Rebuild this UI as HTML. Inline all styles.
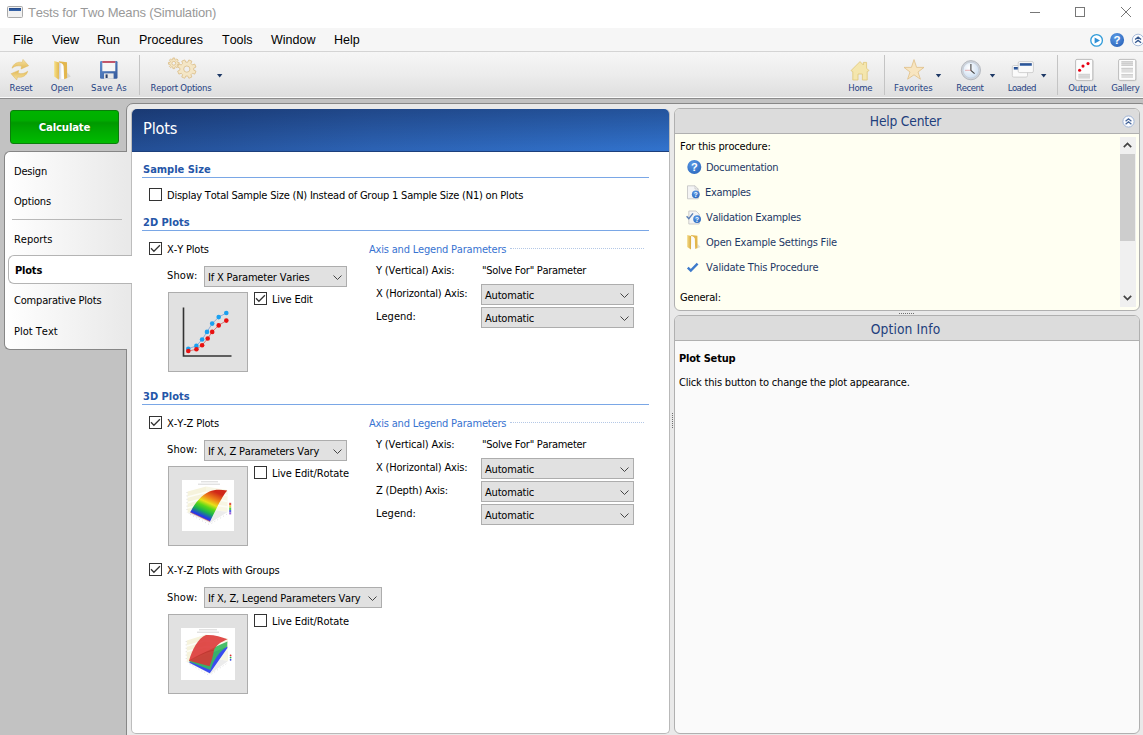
<!DOCTYPE html>
<html><head><meta charset="utf-8"><title>Tests for Two Means (Simulation)</title>
<style>
*{box-sizing:border-box;margin:0;padding:0}
html,body{width:1143px;height:735px;overflow:hidden;background:#c2c2c2;font-family:"DejaVu Sans Condensed","Liberation Sans",sans-serif;font-size:11px;color:#000;letter-spacing:-0.19px;font-kerning:none}
.lib{font-family:"Liberation Sans",sans-serif;letter-spacing:0}
.abs,.abs-c>*{position:absolute}
.t{position:absolute;white-space:nowrap;line-height:13px;font-size:11px;margin-top:1px}
#title{left:0;top:0;width:1143px;height:28px;background:#fff}
#title .tt{left:28px;top:5px;font-size:13px;line-height:15px;color:#999;white-space:nowrap;letter-spacing:-0.19px}
#menu{left:0;top:28px;width:1143px;height:24px;background:#f6f6f6;border-bottom:1px solid #d4d4d4}
#menu span{position:absolute;top:5px;font-size:12.5px;line-height:14px;color:#000;white-space:nowrap}
#tb{left:0;top:52px;width:1143px;height:47px;background:linear-gradient(#f6f6f6,#ececec 50%,#dedede);border-bottom:1px solid #8c8c8c;box-shadow:inset 0 -1px 0 #fbfbfb}
.tl{position:absolute;top:30px;font-size:9.5px;line-height:12px;letter-spacing:-0.1px;color:#1f4283;white-space:nowrap;transform:translateX(-50%)}
.sep{position:absolute;top:3px;width:1px;height:40px;background:#c4c4c4}
/* outer container */
#outer{left:126px;top:103px;width:1022px;height:650px;background:#e9e9e9;border:1px solid #878787;border-radius:7px}
#calc{left:10px;top:110px;width:109px;height:34px;border-radius:3px;border:1px solid #0b7d0b;background:linear-gradient(#00b300 0%,#00af00 28%,#009900 37%,#00a500 55%,#00bc00 100%);color:#fff;font-weight:bold;font-size:11.3px;text-align:center;line-height:33px;text-shadow:0 0 2px rgba(0,80,0,.5)}
#nav{left:4px;top:151px;width:123px;height:199px;border:1px solid #868686;border-right:none;border-radius:6px 0 0 6px;background:linear-gradient(90deg,#ffffff,#e9e9e9)}
#navsel{left:8px;top:255px;width:124px;height:29px;border:1px solid #b4b4b4;border-right:none;border-radius:6px 0 0 6px;background:#fff}
.nv{left:14px}
#navline{left:12px;top:219px;width:110px;height:1px;background:#b8b8b8}
#main{left:131px;top:109px;width:539px;height:625px;background:#fff;border-radius:5px;border:1px solid #b9b9b9;border-top:none;border-left-color:#bdbdbd}
#mainhd{left:132px;top:109px;width:537px;height:43px;border-radius:5px 5px 0 0;background:linear-gradient(rgba(0,0,25,.27),rgba(0,0,25,0) 95%),linear-gradient(90deg,#234e94 0%,#2c62b3 45%,#3172cc 100%);border-bottom:1px solid #1c3f7c}
#mainhd span{position:absolute;left:11px;top:10px;color:#fff;font-size:16.3px;line-height:20px}
.sh{font-weight:bold;color:#2556a8;font-size:11px;margin-top:1px;letter-spacing:0}
.sl{position:absolute;left:142px;width:507px;height:1px;background:#7aa7e6}
.cb{position:absolute;width:13px;height:13px;border:1px solid #333;background:#fff}
.cb svg{position:absolute;left:0;top:0}
.combo{position:absolute;height:21px;background:#e1e1e1;border:1px solid #adadad}
.combo span{position:absolute;left:3px;top:4px;white-space:nowrap;line-height:13px}
.combo svg{position:absolute;right:4px;top:8px}
.pbtn{position:absolute;left:168px;width:80px;height:80px;background:#e1e1e1;border:1px solid #adadad}
.alp{color:#3873d1}
.h{font-style:normal;padding:0 0.1px}
.dot{position:absolute;left:510px;width:134px;height:0;border-top:1px dotted #b4c8e6}
/* right panels */
.rp{position:absolute;left:674px;width:466px;border:1px solid #b0b0b0;border-radius:6px;overflow:hidden}
.rph{position:absolute;left:0;top:0;width:100%;height:25px;background:#dcdcdc;border-bottom:1px solid #b0b0b0;text-align:center;font-size:13.7px;line-height:24px;color:#1f3f7d}
.lk{color:#1e3966;letter-spacing:-0.32px}
</style></head><body>
<div id="title" class="abs lib"><span class="abs tt">Tests for Two Means (Simulation)</span></div>
<div id="menu" class="abs lib">
<span style="left:13px">File</span><span style="left:52px">View</span><span style="left:97px">Run</span><span style="left:139px">Procedures</span><span style="left:222px">Tools</span><span style="left:271px">Window</span><span style="left:334px">Help</span>
</div>
<div id="tb" class="abs">
<span class="tl" style="left:21px;letter-spacing:-0.3px">Reset</span>
<span class="tl" style="left:62px">Open</span>
<span class="tl" style="left:109px;letter-spacing:0.3px">Save As</span>
<span class="tl" style="left:181px;letter-spacing:-0.25px">Report Options</span>
<div class="sep" style="left:139px"></div>
<span class="tl" style="left:860.3px;letter-spacing:-0.3px">Home</span>
<span class="tl" style="left:913.3px">Favorites</span>
<span class="tl" style="left:969.8px;letter-spacing:-0.5px">Recent</span>
<span class="tl" style="left:1021.8px;letter-spacing:-0.5px">Loaded</span>
<span class="tl" style="left:1082.3px;letter-spacing:-0.3px">Output</span>
<span class="tl" style="left:1125.3px;letter-spacing:-0.3px">Gallery</span>
<div class="sep" style="left:884px"></div>
<div class="sep" style="left:1057px"></div>
</div>

<div id="outer" class="abs"></div>
<div id="calc" class="abs">Calculate</div>
<div id="nav" class="abs"></div>
<div id="navline" class="abs"></div>
<div id="main" class="abs"></div>
<div id="navsel" class="abs"></div>
<span class="t nv" style="top:164px">Design</span>
<span class="t nv" style="top:194px">Options</span>
<span class="t nv" style="top:232px;letter-spacing:-0.02px">Reports</span>
<span class="t nv" style="top:263px;font-weight:bold;left:15px">Plots</span>
<span class="t nv" style="top:293px">Comparative Plots</span>
<span class="t nv" style="top:324px;letter-spacing:0px">Plot Text</span>

<div id="mainhd" class="abs"><span>Plots</span></div>
<!--MAIN-->
<!-- Sample Size -->
<span class="t sh" style="left:143px;top:162px">Sample Size</span>
<div class="sl" style="top:177px"></div>
<div class="cb" style="left:149px;top:188px"></div>
<span class="t" style="left:167px;top:188px;letter-spacing:-0.222px">Display Total Sample Size (N) Instead of Group 1 Sample Size (N1) on Plots</span>
<!-- 2D Plots -->
<span class="t sh" style="left:143px;top:215px">2D Plots</span>
<div class="sl" style="top:230px"></div>
<div class="cb" style="left:149px;top:242px"><svg width="11" height="11" viewBox="0 0 11 11"><path d="M1 5.3 L3.9 8.3 L9.9 2.2" fill="none" stroke="#333" stroke-width="1.25"/></svg></div>
<span class="t" style="left:167px;top:242px">X<i class="h">-</i>Y Plots</span>
<span class="t" style="left:167px;top:268px;letter-spacing:0.1px">Show:</span>
<div class="combo" style="left:204px;top:266px;width:143px"><span>If X Parameter Varies</span><svg width="9" height="6" viewBox="0 0 9 6"><path d="M0.5 0.5 L4.5 4.5 L8.5 0.5" fill="none" stroke="#444" stroke-width="1"/></svg></div>
<div class="pbtn" style="top:292px">
<svg width="78" height="78" viewBox="169 293 78 78" style="position:absolute;left:0;top:0">
<path d="M183.5 307.5 V356 H231.5" fill="none" stroke="#333" stroke-width="1.6"/>
<polyline points="188.3,348.7 196.4,345.9 202.1,339.5 207,331.9 212.2,323.6 218.7,317.1 226.3,313" fill="none" stroke="#7aa0d8" stroke-width="0.8"/>
<polyline points="188.3,351 196.4,349.3 202.1,345.2 207.7,338.5 212.2,331.9 218.7,325.4 226.3,320.6" fill="none" stroke="#d06060" stroke-width="0.8"/>
<g fill="#1aa0f0"><circle cx="188.3" cy="348.7" r="2.3"/><circle cx="196.4" cy="345.9" r="2.3"/><circle cx="202.1" cy="339.5" r="2.3"/><circle cx="207" cy="331.9" r="2.3"/><circle cx="212.2" cy="323.6" r="2.3"/><circle cx="218.7" cy="317.1" r="2.3"/><circle cx="226.3" cy="313" r="2.3"/></g>
<g fill="#e81010"><circle cx="188.3" cy="351" r="2.3"/><circle cx="196.4" cy="349.3" r="2.3"/><circle cx="202.1" cy="345.2" r="2.3"/><circle cx="207.7" cy="338.5" r="2.3"/><circle cx="212.2" cy="331.9" r="2.3"/><circle cx="218.7" cy="325.4" r="2.3"/><circle cx="226.3" cy="320.6" r="2.3"/></g>
</svg></div>
<div class="cb" style="left:254px;top:292px"><svg width="11" height="11" viewBox="0 0 11 11"><path d="M1 5.3 L3.9 8.3 L9.9 2.2" fill="none" stroke="#333" stroke-width="1.25"/></svg></div>
<span class="t" style="left:272px;top:292px">Live Edit</span>
<span class="t alp" style="left:369px;top:242px">Axis and Legend Parameters</span>
<div class="dot" style="top:248px"></div>
<span class="t" style="left:376px;top:263px">Y (Vertical) Axis:</span>
<span class="t" style="left:482px;top:263px;letter-spacing:-0.29px">"Solve For" Parameter</span>
<span class="t" style="left:376px;top:286px">X (Horizontal) Axis:</span>
<div class="combo" style="left:481px;top:284px;width:153px"><span>Automatic</span><svg width="9" height="6" viewBox="0 0 9 6"><path d="M0.5 0.5 L4.5 4.5 L8.5 0.5" fill="none" stroke="#444" stroke-width="1"/></svg></div>
<span class="t" style="left:376px;top:309px;letter-spacing:0px">Legend:</span>
<div class="combo" style="left:481px;top:307px;width:153px"><span>Automatic</span><svg width="9" height="6" viewBox="0 0 9 6"><path d="M0.5 0.5 L4.5 4.5 L8.5 0.5" fill="none" stroke="#444" stroke-width="1"/></svg></div>
<!-- 3D Plots -->
<span class="t sh" style="left:143px;top:389px">3D Plots</span>
<div class="sl" style="top:404px"></div>
<div class="cb" style="left:149px;top:416px"><svg width="11" height="11" viewBox="0 0 11 11"><path d="M1 5.3 L3.9 8.3 L9.9 2.2" fill="none" stroke="#333" stroke-width="1.25"/></svg></div>
<span class="t" style="left:167px;top:416px">X<i class="h">-</i>Y<i class="h">-</i>Z Plots</span>
<span class="t" style="left:167px;top:442px;letter-spacing:0.1px">Show:</span>
<div class="combo" style="left:204px;top:440px;width:143px"><span>If X, Z Parameters Vary</span><svg width="9" height="6" viewBox="0 0 9 6"><path d="M0.5 0.5 L4.5 4.5 L8.5 0.5" fill="none" stroke="#444" stroke-width="1"/></svg></div>
<div class="pbtn" style="top:466px"><svg width="78" height="78" viewBox="169 467 78 78" style="position:absolute;left:0;top:0">
<defs><linearGradient id="rb" gradientUnits="userSpaceOnUse" x1="198" y1="519" x2="211" y2="490"><stop offset="0" stop-color="#6a2ad0"/><stop offset="0.14" stop-color="#2438e8"/><stop offset="0.3" stop-color="#18b050"/><stop offset="0.46" stop-color="#58d818"/><stop offset="0.6" stop-color="#e8e018"/><stop offset="0.76" stop-color="#f08818"/><stop offset="1" stop-color="#d02818"/></linearGradient></defs>
<rect x="182" y="480" width="52" height="51" fill="#fff"/>
<path d="M187.6 491.6 L206 486.4 L206 509 L187.6 513 Z" fill="#f6f3dc"/>
<path d="M206 486.4 L227.6 490 L227.6 512 L206 509 Z" fill="#f8f6e4"/>
<path d="M187.6 513 L206 509 L227.6 512 L210 523 Z" fill="#ececec"/>
<path d="M187.6 497 L206 492.2 L227.6 495.6 M187.6 502.6 L206 498 L227.6 501.4 M187.6 508 L206 503.6 L227.6 507" fill="none" stroke="#fdfdf6" stroke-width="1.6"/>
<path d="M190.2 512.2 C194 505 201 495 209.5 491.6 C214 489.6 220 489.4 227.2 490.6 C224 494 219 503 210 521.6 Z" fill="url(#rb)"/>
<path d="M190.2 512.2 L210 521.6" stroke="#d05030" stroke-width="0.5"/>
<rect x="229.2" y="502.8" width="2" height="2.4" fill="#e05040"/><rect x="229.2" y="505.2" width="2" height="2.4" fill="#e8d040"/><rect x="229.2" y="507.6" width="2" height="2.4" fill="#50c850"/><rect x="229.2" y="510" width="2" height="2.4" fill="#5060e0"/><rect x="229.2" y="512.4" width="2" height="2" fill="#a060d8"/>
<path d="M201 481.8 H218 M198 484.2 H220" stroke="#c4c4c4" stroke-width="0.7"/>
<path d="M190 514.4 L209 524.4 M211.5 523.4 L227.8 513.6 M187 492 V512.6" stroke="#c8c8c8" stroke-width="0.6" stroke-dasharray="1 2.4"/>
</svg>
</div>
<div class="cb" style="left:254px;top:466px"></div>
<span class="t" style="left:272px;top:466px;letter-spacing:-0.11px">Live Edit/Rotate</span>
<span class="t alp" style="left:369px;top:416px">Axis and Legend Parameters</span>
<div class="dot" style="top:422px"></div>
<span class="t" style="left:376px;top:437px">Y (Vertical) Axis:</span>
<span class="t" style="left:482px;top:437px;letter-spacing:-0.29px">"Solve For" Parameter</span>
<span class="t" style="left:376px;top:460px">X (Horizontal) Axis:</span>
<div class="combo" style="left:481px;top:458px;width:153px"><span>Automatic</span><svg width="9" height="6" viewBox="0 0 9 6"><path d="M0.5 0.5 L4.5 4.5 L8.5 0.5" fill="none" stroke="#444" stroke-width="1"/></svg></div>
<span class="t" style="left:376px;top:483px">Z (Depth) Axis:</span>
<div class="combo" style="left:481px;top:481px;width:153px"><span>Automatic</span><svg width="9" height="6" viewBox="0 0 9 6"><path d="M0.5 0.5 L4.5 4.5 L8.5 0.5" fill="none" stroke="#444" stroke-width="1"/></svg></div>
<span class="t" style="left:376px;top:506px;letter-spacing:0px">Legend:</span>
<div class="combo" style="left:481px;top:504px;width:153px"><span>Automatic</span><svg width="9" height="6" viewBox="0 0 9 6"><path d="M0.5 0.5 L4.5 4.5 L8.5 0.5" fill="none" stroke="#444" stroke-width="1"/></svg></div>
<!-- groups -->
<div class="cb" style="left:149px;top:563px"><svg width="11" height="11" viewBox="0 0 11 11"><path d="M1 5.3 L3.9 8.3 L9.9 2.2" fill="none" stroke="#333" stroke-width="1.25"/></svg></div>
<span class="t" style="left:167px;top:563px">X<i class="h">-</i>Y<i class="h">-</i>Z Plots with Groups</span>
<span class="t" style="left:167px;top:590px;letter-spacing:0.1px">Show:</span>
<div class="combo" style="left:204px;top:587px;width:178px"><span>If X, Z, Legend Parameters Vary</span><svg width="9" height="6" viewBox="0 0 9 6"><path d="M0.5 0.5 L4.5 4.5 L8.5 0.5" fill="none" stroke="#444" stroke-width="1"/></svg></div>
<div class="pbtn" style="top:614px"><svg width="78" height="78" viewBox="169 615 78 78" style="position:absolute;left:0;top:0">
<rect x="181" y="628" width="54" height="52" fill="#fff"/>
<path d="M186.8 640.4 L206 634.6 L206 657 L186.8 662 Z" fill="#f6f3dc"/>
<path d="M206 634.6 L228 638.4 L228 661 L206 657 Z" fill="#f8f6e4"/>
<path d="M186.8 662 L206 657 L228 661 L210 674 Z" fill="#ececec"/>
<path d="M186.8 646 L206 640.6 L228 644 M186.8 651.6 L206 646.6 L228 650" fill="none" stroke="#fdfdf6" stroke-width="1.6"/>
<path d="M189 662.4 C200 657 216 651 227.4 646.4 L227.4 648 L209.8 673.2 Z" fill="#3a4cf0"/>
<path d="M189 661.4 C198 656 212 648 227.4 641.6 L227.2 646.4 C219.6 651 213.6 660 210.4 670 Z" fill="#38b860" opacity="0.92"/>
<path d="M189 660.8 C192 650 198 638 206 635 C213 634.4 221 636.6 227.6 639.2 C221 642 216 645 214 650 C213 656 211.6 661 209.6 666.2 Z" fill="#dc3434" opacity="0.88"/>
<path d="M189 660.8 C196 657 204 652 214 650" stroke="#b02020" stroke-width="0.6" fill="none" opacity="0.6"/>
<circle cx="230.6" cy="655.4" r="0.9" fill="#e03030"/><circle cx="230.6" cy="657.6" r="0.9" fill="#30b050"/><circle cx="230.6" cy="659.8" r="0.9" fill="#3040e0"/>
<path d="M199 629.8 H217 M197 632.2 H219" stroke="#c4c4c4" stroke-width="0.7"/>
<path d="M189.6 664 L208.6 675 M211.5 674 L228 662.6 M186.2 641 V661.6" stroke="#c8c8c8" stroke-width="0.6" stroke-dasharray="1 2.4"/>
</svg>
</div>
<div class="cb" style="left:254px;top:614px"></div>
<span class="t" style="left:272px;top:614px;letter-spacing:-0.11px">Live Edit/Rotate</span>
<!--/MAIN-->
<!--RIGHT-->
<div class="rp" style="top:108px;height:203px;background:#fffff2">
<div class="rph" style="padding-right:3px">Help Center</div>
<svg class="abs" style="left:447px;top:6px" width="13" height="13" viewBox="0 0 13 13"><circle cx="6.5" cy="6.5" r="5.6" fill="#fbfcfe" stroke="#9fb4d6" stroke-width="1"/><path d="M3.6 6.2 L6.5 3.8 L9.4 6.2 M3.6 9.2 L6.5 6.8 L9.4 9.2" fill="none" stroke="#48689c" stroke-width="1.3"/></svg>
<!-- scrollbar -->
<div class="abs" style="left:445px;top:28px;width:16px;height:170px;background:#f0f0f0"></div>
<div class="abs" style="left:445px;top:45px;width:15px;height:87px;background:#cdcdcd"></div>
<svg class="abs" style="left:448px;top:33px" width="9" height="6" viewBox="0 0 9 6"><path d="M0.8 5.2 L4.5 1.5 L8.2 5.2" fill="none" stroke="#444" stroke-width="1.7"/></svg>
<svg class="abs" style="left:448px;top:186px" width="9" height="6" viewBox="0 0 9 6"><path d="M0.8 0.8 L4.5 4.5 L8.2 0.8" fill="none" stroke="#444" stroke-width="1.7"/></svg>
</div>
<span class="t" style="left:680px;top:139px">For this procedure:</span>
<span class="t lk" style="left:706px;top:160px">Documentation</span>
<span class="t lk" style="left:705px;top:185px">Examples</span>
<span class="t lk" style="left:706px;top:210px">Validation Examples</span>
<span class="t lk" style="left:706px;top:235px;letter-spacing:-0.22px">Open Example Settings File</span>
<span class="t lk" style="left:706px;top:260px;letter-spacing:-0.22px">Validate This Procedure</span>
<span class="t" style="left:680px;top:290px">General:</span>
<!--HELPICONS-->
<svg class="abs" style="left:684px;top:157px" width="20" height="120" viewBox="684 157 20 120">
<defs><radialGradient id="qg" cx="0.4" cy="0.3" r="0.8"><stop offset="0" stop-color="#5a9ae6"/><stop offset="1" stop-color="#2a66bc"/></radialGradient>
<linearGradient id="fg" x1="0" y1="0" x2="1" y2="0"><stop offset="0" stop-color="#f3d985"/><stop offset="1" stop-color="#d9ab3c"/></linearGradient></defs>
<circle cx="694.3" cy="167" r="7" fill="url(#qg)"/>
<text x="694.3" y="171" text-anchor="middle" font-family="Liberation Sans, sans-serif" font-weight="bold" font-size="11" fill="#fff" letter-spacing="0">?</text>
<!-- examples doc -->
<path d="M687.5 185.8 H695 L698.2 189 V198.8 H687.5 Z" fill="#f4f4f4" stroke="#c2c2c2" stroke-width="0.8"/>
<path d="M695 185.8 V189 H698.2" fill="none" stroke="#c2c2c2" stroke-width="0.7"/>
<circle cx="695.8" cy="194.3" r="3.9" fill="url(#qg)"/>
<text x="695.8" y="196.7" text-anchor="middle" font-family="Liberation Sans, sans-serif" font-weight="bold" font-size="6.5" fill="#fff" letter-spacing="0">?</text>
<!-- validation doc -->
<path d="M688.8 211 H696 L699.2 214.2 V224 H688.8 Z" fill="#f4f4f4" stroke="#c2c2c2" stroke-width="0.8"/>
<path d="M686.6 216.2 L688.8 218.6 L693 213.4" fill="none" stroke="#5a7fb6" stroke-width="1.4"/>
<circle cx="697.1" cy="219.1" r="3.9" fill="url(#qg)"/>
<text x="697.1" y="221.5" text-anchor="middle" font-family="Liberation Sans, sans-serif" font-weight="bold" font-size="6.5" fill="#fff" letter-spacing="0">?</text>
<!-- folder -->
<path d="M 690.9 235.1 L 697.4 235.8 L 697.6 248.1 L 695.2 249.1 L 694.7 238.7 C 694.4 237.2 693.1 236.4 691.4 236.2 Z" fill="#e3b74e"/>
<path d="M 691.2 236.3 C 693.0 236.5 694.2 237.3 694.4 238.7 L 695.0 249.0 L 691.2 248.8 Z" fill="#fbfbfb"/>
<path d="M 687.2 234.9 L 691.1 236.1 L 691.0 249.5 L 687.2 247.1 Z" fill="url(#fg)"/>
<path d="M 697.6 243.9 L 700.5 246.9 L 697.6 248.2 Z" fill="#b8b8b8" opacity="0.45"/>
<!-- check -->
<path d="M687.8 267.6 L690.8 270.6 L697.6 263.6" fill="none" stroke="#3d7acb" stroke-width="2.4"/>
</svg>
<!--/HELPICONS-->
<div class="rp" style="top:315px;height:419px;background:#fafafa">
<div class="rph" style="padding-right:3px;line-height:26px;letter-spacing:0.12px">Option Info</div>
</div>
<span class="t" style="left:679px;top:351px;font-weight:bold">Plot Setup</span>
<span class="t" style="left:679px;top:375px">Click this button to change the plot appearance.</span>
<!-- splitter dots -->
<div class="abs" style="left:899px;top:313px;width:15px;height:1px;background:repeating-linear-gradient(90deg,#6e6e6e 0 1px,transparent 1px 2px)"></div>
<div class="abs" style="left:672px;top:413px;width:1px;height:15px;background:repeating-linear-gradient(180deg,#6e6e6e 0 1px,transparent 1px 2px)"></div>
<!--/RIGHT-->
<!--TBICONS-->
<svg class="abs" style="left:0;top:0" width="1143" height="98" viewBox="0 0 1143 98">
<defs>
<linearGradient id="gold" x1="0" y1="0" x2="0" y2="1"><stop offset="0" stop-color="#f6e2a4"/><stop offset="1" stop-color="#e2b955"/></linearGradient>
<linearGradient id="fold" x1="0" y1="0" x2="1" y2="0"><stop offset="0" stop-color="#f6e088"/><stop offset="1" stop-color="#e2b74e"/></linearGradient>
<linearGradient id="pap" x1="0" y1="0" x2="1" y2="0"><stop offset="0" stop-color="#c4c8d6"/><stop offset="0.55" stop-color="#ffffff"/><stop offset="1" stop-color="#ffffff"/></linearGradient>
<linearGradient id="flop" x1="0" y1="0" x2="1" y2="1"><stop offset="0" stop-color="#5f8fd0"/><stop offset="1" stop-color="#34589a"/></linearGradient>
<linearGradient id="wbar" x1="0" y1="0" x2="0" y2="1"><stop offset="0" stop-color="#1f4585"/><stop offset="1" stop-color="#3a68ae"/></linearGradient>
<radialGradient id="qg2" cx="0.4" cy="0.3" r="0.8"><stop offset="0" stop-color="#5a9ae6"/><stop offset="1" stop-color="#2a62b8"/></radialGradient>
<radialGradient id="clk" cx="0.4" cy="0.35" r="0.8"><stop offset="0" stop-color="#ffffff"/><stop offset="1" stop-color="#c4d8ee"/></radialGradient>
</defs>
<!-- title icon -->
<rect x="7.5" y="6.5" width="15" height="11" rx="1" fill="#f1f1f1" stroke="#a9a9a9"/>
<rect x="9" y="8" width="12" height="3" fill="url(#wbar)"/>
<!-- window controls -->
<g stroke="#777" stroke-width="1" fill="none"><path d="M1030 12.5 H1040"/><rect x="1075.5" y="7.5" width="9" height="9"/><path d="M1121 7 L1131 17 M1131 7 L1121 17"/></g>
<!-- menu right icons -->
<circle cx="1096.6" cy="40.4" r="5.8" fill="#fff" stroke="#2f9bd9" stroke-width="1.3"/><path d="M1094.6 37.4 L1100 40.4 L1094.6 43.4 Z" fill="#2f8fd6"/>
<circle cx="1117.1" cy="40" r="7" fill="url(#qg2)"/>
<text x="1117.1" y="44.2" text-anchor="middle" font-family="Liberation Sans, sans-serif" font-weight="bold" font-size="11.5" fill="#fff" letter-spacing="0">?</text>
<circle cx="1138.1" cy="40" r="5.8" fill="#fbfcfe" stroke="#a9bcd9" stroke-width="1"/><path d="M1135.1 39.6 L1138.1 37.2 L1141.1 39.6 M1135.1 42.8 L1138.1 40.4 L1141.1 42.8" fill="none" stroke="#34588f" stroke-width="1.3"/>
<!-- reset -->
<g fill="url(#gold)" stroke="#dcb75a" stroke-width="0.5">
<path d="M12,68.2 C13.2,63.4 18,61.4 22.2,62.4 L23,59.4 L28.6,65.7 L21,69 L21.6,66.2 C18,65.2 14.6,66 12,68.2 Z"/>
<path transform="rotate(180 19.85 69.7)" d="M12,68.2 C13.2,63.4 18,61.4 22.2,62.4 L23,59.4 L28.6,65.7 L21,69 L21.6,66.2 C18,65.2 14.6,66 12,68.2 Z"/>
</g>
<!-- open -->
<path d="M58.8 61.3 L67 62.3 L67.2 77.9 L64.2 79.2 L63.6 66 C63.2 64 61.6 63 59.4 62.8 Z" fill="#e3b74e"/>
<path d="M59.2 62.9 C61.4 63.1 63 64.2 63.2 66 L64 79.1 L59.2 78.8 Z" fill="url(#pap)"/>
<path d="M54.2 61.1 L59.1 62.6 L58.9 79.7 L54.2 76.6 Z" fill="url(#fold)"/>
<path d="M67.2 72.6 L70.8 76.4 L67.2 78 Z" fill="#b8b8b8" opacity="0.45"/>
<!-- save -->
<rect x="100" y="61" width="17.5" height="17.8" rx="1.2" fill="url(#flop)"/>
<rect x="102.3" y="61.2" width="13" height="10" fill="#f6f6f6"/><rect x="102.3" y="61.2" width="13" height="1.6" fill="#b8324a"/>
<rect x="104" y="73.4" width="9.6" height="5.4" fill="#e8e8e8"/><rect x="105.6" y="74.4" width="2" height="3.6" fill="#2a3f68"/>
<!-- gears -->
<g fill="#f4e6c6" stroke="#d9ba80" stroke-width="0.75" fill-rule="evenodd" stroke-linejoin="round">
<path d="M177.58 62.33 L179.12 62.37 L179.12 64.23 L177.58 64.27 L177.16 65.29 L178.22 66.41 L176.91 67.72 L175.79 66.66 L174.77 67.08 L174.73 68.62 L172.87 68.62 L172.83 67.08 L171.81 66.66 L170.69 67.72 L169.38 66.41 L170.44 65.29 L170.02 64.27 L168.48 64.23 L168.48 62.37 L170.02 62.33 L170.44 61.31 L169.38 60.19 L170.69 58.88 L171.81 59.94 L172.83 59.52 L172.87 57.98 L174.73 57.98 L174.77 59.52 L175.79 59.94 L176.91 58.88 L178.22 60.19 L177.16 61.31 Z M171.90 63.30 a1.90 1.90 0 1 0 3.80 0 a1.90 1.90 0 1 0 -3.80 0 Z"/>
<path d="M193.73 70.09 L195.97 71.15 L194.74 74.14 L192.40 73.30 L191.00 74.70 L191.84 77.04 L188.85 78.27 L187.79 76.03 L185.81 76.03 L184.75 78.27 L181.76 77.04 L182.60 74.70 L181.20 73.30 L178.86 74.14 L177.63 71.15 L179.87 70.09 L179.87 68.11 L177.63 67.05 L178.86 64.06 L181.20 64.90 L182.60 63.50 L181.76 61.16 L184.75 59.93 L185.81 62.17 L187.79 62.17 L188.85 59.93 L191.84 61.16 L191.00 63.50 L192.40 64.90 L194.74 64.06 L195.97 67.05 L193.73 68.11 Z M183.70 69.10 a3.10 3.10 0 1 0 6.20 0 a3.10 3.10 0 1 0 -6.20 0 Z"/>
</g>
<!-- dropdown arrows -->
<g fill="#1e3966"><path d="M217 74 h5.4 l-2.7 3.4 Z"/><path d="M935.8 74 h5.4 l-2.7 3.4 Z"/><path d="M989.8 74 h5.4 l-2.7 3.4 Z"/><path d="M1041 74 h5.4 l-2.7 3.4 Z"/></g>
<!-- home -->
<path d="M851 70.6 L860 61.6 L863.4 65 V62.4 H866.6 V68.2 L869 70.6 L867.2 71.6 V80 H862.4 V74 H858 V80 H852.8 V71.6 Z" fill="#f4e6ae" stroke="#dfc778" stroke-width="0.8" stroke-linejoin="round"/>
<!-- star -->
<path d="M914 59.6 L916.6 67.4 L924 67.4 L918 72 L920.4 79.2 L914 74.8 L907.6 79.2 L910 72 L904 67.4 L911.4 67.4 Z" fill="#f8e5c0" stroke="#e0bf86" stroke-width="0.8" stroke-linejoin="round"/>
<!-- clock -->
<circle cx="970.9" cy="70.2" r="9.6" fill="#d0d4da" stroke="#a9aeb6" stroke-width="0.8"/>
<circle cx="970.9" cy="70.2" r="7.8" fill="url(#clk)" stroke="#b8c4d4" stroke-width="0.5"/>
<path d="M970.9 64 V70.4 L974.6 73.6" fill="none" stroke="#444" stroke-width="1.1"/><path d="M965 70.3 H970.9" stroke="#d66" stroke-width="0.5"/>
<!-- loaded -->
<rect x="1012.3" y="65.5" width="15.2" height="11.6" rx="1.4" fill="#fafafa" stroke="#c6c6c6" stroke-width="0.8"/><rect x="1013.8" y="67" width="5" height="2.6" fill="url(#wbar)"/>
<rect x="1018.2" y="61.6" width="15.2" height="11" rx="1.4" fill="#fafafa" stroke="#c6c6c6" stroke-width="0.8"/><rect x="1019.8" y="63.2" width="12" height="2.6" fill="url(#wbar)"/>
<!-- output -->
<rect x="1076.4" y="60.2" width="17.2" height="21" rx="1.4" fill="#c8c8c8" opacity="0.6"/>
<rect x="1075.6" y="59.4" width="17.2" height="21" rx="1.4" fill="#fdfdfd" stroke="#b6b6b6" stroke-width="0.9"/>
<rect x="1078.4" y="73.8" width="11.6" height="4.6" fill="#dedede"/><path d="M1078.4 74.4 h11.6 M1078.4 76.2 h11.6 M1078.4 78 h11.6" stroke="#cbcbcb" stroke-width="0.7"/>
<g fill="#e60012"><circle cx="1079.6" cy="70.3" r="1.55"/><circle cx="1083" cy="66.1" r="1.55"/><circle cx="1088" cy="63.6" r="1.55"/></g>
<!-- gallery -->
<rect x="1119.4" y="60.2" width="17.2" height="21" rx="1.4" fill="#c8c8c8" opacity="0.6"/>
<rect x="1118.6" y="59.4" width="17.2" height="21" rx="1.4" fill="#fdfdfd" stroke="#b6b6b6" stroke-width="0.9"/>
<g fill="#dedede"><rect x="1121.4" y="61.2" width="11.6" height="4.8"/><rect x="1121.4" y="67.8" width="11.6" height="4.8"/><rect x="1121.4" y="74.2" width="11.6" height="3.8"/></g>
<path d="M1121.4 61.6 h11.6 M1121.4 63.4 h11.6 M1121.4 65.4 h11.6 M1121.4 68.4 h11.6 M1121.4 74.6 h11.6" stroke="#c6c6c6" stroke-width="0.8"/>
</svg>
<!--/TBICONS-->
</body></html>
